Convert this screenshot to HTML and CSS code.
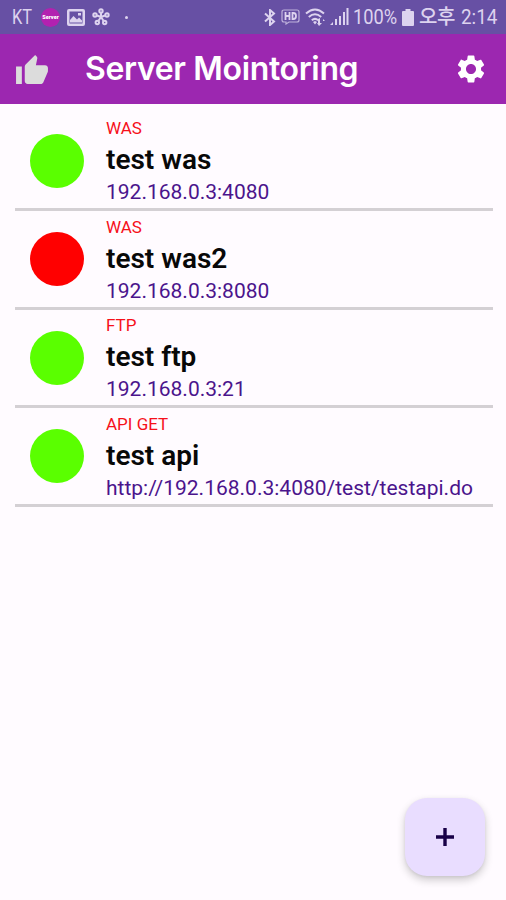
FILE: index.html
```html
<!DOCTYPE html>
<html lang="ko">
<head>
<meta charset="utf-8">
<title>Server Mointoring</title>
<link rel="stylesheet" href="styles.css">
</head>
<body>
<div class="statusbar">
  <div class="notices">
    <span class="carrier">KT</span>
    <span class="app-badge">Server</span>
    <svg class="picture" viewBox="0 0 18 17"><path fill-rule="evenodd" d="M2 0h14q2 0 2 2v13q0 2-2 2H2q-2 0-2-2V2q0-2 2-2zM2.500 2.500v12h13v-12zM3 13.500V11l3.500-4 3.500 3.500 2-2 3 3v2zM11 4h3v2.500h-3z"/></svg>
    <svg class="flower" viewBox="0 0 18 18"><g fill="none" stroke="currentColor" stroke-width="2"><path d="M9 9V5M9 9l4-1.500M9 9l2.500 3.700M9 9l-2.500 3.700M9 9L5 7.500"/><circle cx="9" cy="3" r="1.700"/><circle cx="15" cy="7" r="1.700"/><circle cx="12.700" cy="14.500" r="1.700"/><circle cx="5.300" cy="14.500" r="1.700"/><circle cx="3" cy="7" r="1.700"/></g></svg>
    <span class="dot"></span>
  </div>
  <div class="system">
    <svg class="bluetooth" viewBox="0 0 12 17"><path d="M1 4.500l9 8L6 16V1l4 3.500-9 8" fill="none" stroke="currentColor" stroke-width="2"/></svg>
    <svg class="hd" viewBox="0 0 19 16"><path d="M3 1h13q2 0 2 2v8q0 2-2 2H8l-3 2v-2H3q-2 0-2-2V3q0-2 2-2z" fill="none" stroke="currentColor" stroke-width="1.200" opacity=".75"/><path d="M4.500 3v8M8.500 3v8M4.500 7h4M11.500 4v6h1q2.500 0 2.500-3t-2.500-3z" fill="none" stroke="currentColor" stroke-width="1.800"/></svg>
    <svg class="wifi" viewBox="0 0 21 19"><path d="M1 5.500q9-8 18 0M3.800 9q6.200-5.400 12.400 0M6.800 12.200q3.200-2.600 6.400 0" fill="none" stroke="currentColor" stroke-width="2"/><path d="M8 14l2-1 2 1-2 2.500zM15 10v5h2l-3 3-2-3h1v-4zM18 11l2 2h-2z"/></svg>
    <svg class="signal" viewBox="0 0 19 18"><path d="M0 17l3-3v3zM5 11h2v6H5zM9 8h2v9H9zM13 4h2v13h-2zM16.500 0h2v17h-2z"/></svg>
    <span class="percent">100%</span>
    <svg class="battery" viewBox="0 0 12 17"><path d="M3.500 0h5v2H11q1 0 1 1v13q0 1-1 1H1q-1 0-1-1V3q0-1 1-1h2.500z"/></svg>
    <span class="meridiem">오후</span>
    <span class="clock">2:14</span>
  </div>
</div>
<header class="appbar">
  <svg class="thumb" viewBox="1 1 22 20"><path d="M1 21h4V9H1v12zm22-11c0-1.100-.9-2-2-2h-6.310l.95-4.570.03-.32c0-.41-.17-.79-.44-1.060L14.170 1 7.590 7.590C7.220 7.950 7 8.450 7 9v10c0 1.100.9 2 2 2h9c.83 0 1.540-.5 1.840-1.220l3.020-7.050c.09-.23.14-.47.14-.73v-2z"/></svg>
  <h1>Server Mointoring</h1>
  <svg class="gear" viewBox="2 2 20 20"><path d="M19.140 12.940c.04-.3.060-.61.060-.94 0-.32-.02-.64-.07-.94l2.030-1.580c.18-.14.23-.41.12-.61l-1.920-3.320c-.12-.22-.37-.29-.59-.22l-2.390.96c-.5-.38-1.030-.7-1.620-.94l-.36-2.540c-.04-.24-.24-.41-.48-.41h-3.840c-.24 0-.43.17-.47.41l-.36 2.540c-.59.24-1.130.57-1.620.94l-2.390-.96c-.22-.08-.47 0-.59.22L2.740 8.870c-.12.21-.08.47.12.61l2.030 1.580c-.05.3-.09.63-.09.94s.02.64.07.94l-2.030 1.580c-.18.14-.23.41-.12.61l1.920 3.320c.12.22.37.29.59.22l2.390-.96c.5.38 1.030.7 1.620.94l.36 2.540c.05.24.24.41.48.41h3.840c.24 0 .44-.17.47-.41l.36-2.540c.59-.24 1.130-.56 1.620-.94l2.390.96c.22.08.47 0 .59-.22l1.920-3.320c.12-.22.07-.47-.12-.61l-2.010-1.580zM12 15.600c-1.980 0-3.600-1.620-3.600-3.600s1.620-3.600 3.600-3.600 3.600 1.620 3.600 3.600-1.620 3.600-3.600 3.600z"/></svg>
</header>
<main class="servers">
  <article class="server">
    <span class="state up"></span>
    <div class="info"><div class="kind">WAS</div><div class="name">test was</div><div class="address">192.168.0.3:4080</div></div>
  </article>
  <article class="server">
    <span class="state down"></span>
    <div class="info"><div class="kind">WAS</div><div class="name">test was2</div><div class="address">192.168.0.3:8080</div></div>
  </article>
  <article class="server">
    <span class="state up"></span>
    <div class="info"><div class="kind">FTP</div><div class="name">test ftp</div><div class="address">192.168.0.3:21</div></div>
  </article>
  <article class="server">
    <span class="state up"></span>
    <div class="info"><div class="kind">API GET</div><div class="name">test api</div><div class="address">http://192.168.0.3:4080/test/testapi.do</div></div>
  </article>
</main>
<button class="fab" aria-label="Add"><svg viewBox="0 0 18 18"><path d="M7.300 0h3.400v7.300H18v3.400h-7.300V18H7.300v-7.300H0V7.300h7.300z"/></svg></button>
</body>
</html>
```
FILE: styles.css
```css
* { box-sizing: border-box; }
body {
  margin: 0;
  height: 900px;
  overflow: hidden;
  background: #fffbff;
  font-family: Roboto, "Noto Sans CJK KR", sans-serif;
}
svg { display: block; flex: none; fill: currentColor; }
.statusbar {
  display: flex;
  justify-content: space-between;
  height: 34px;
  padding: 0 10px 0 12px;
  background: #6750a4;
  color: #ddd3ef;
  font-size: 20px;
  line-height: 34px;
  white-space: nowrap;
}
.notices, .system { display: flex; align-items: center; }
.carrier, .percent, .clock { transform-origin: left center; }
.carrier { width: 29px; font-size: 21px; transform: scaleX(.78); }
.app-badge {
  width: 19px;
  height: 19px;
  border-radius: 50%;
  background: #b321b0;
  color: #fff;
  font-size: 5.5px;
  font-weight: 900;
  line-height: 19px;
  text-align: center;
}
.picture { width: 18px; height: 17px; margin-left: 7px; }
.flower { width: 18px; height: 18px; margin-left: 7px; }
.dot { width: 3px; height: 3px; margin-left: 15px; border-radius: 50%; background: currentColor; }
.bluetooth { width: 12px; height: 17px; }
.hd { width: 19px; height: 16px; margin-left: 5px; }
.wifi { width: 21px; height: 19px; margin-left: 5px; }
.signal { width: 19px; height: 18px; margin-left: 4px; }
.percent { width: 46px; margin-left: 4px; font-size: 21px; transform: scaleX(.87); }
.battery { width: 12px; height: 17px; margin-left: 3px; }
.meridiem { width: 38px; margin-left: 5px; font-size: 20px; font-weight: 500; letter-spacing: -0.5px; }
.clock { width: 35px; margin-left: 4px; font-size: 21px; transform: scaleX(.9); }
.appbar {
  display: flex;
  align-items: center;
  height: 70px;
  padding: 0 21px 0 16px;
  background: #9c27b0;
  color: #fff;
}
.thumb { width: 32px; height: 29px; color: #dcdcdc; }
.appbar h1 {
  margin: 0 auto 0 37px;
  font: 600 32px/40px Inter, sans-serif;
  letter-spacing: -0.35px;
  white-space: nowrap;
}
.gear { width: 28px; height: 28px; }
.servers { padding: 8.5px 13px 0 15px; }
.server {
  display: flex;
  align-items: center;
  height: 98.5px;
  padding-left: 15px;
  border-bottom: 3px solid #d4d0d4;
}
.state { flex: none; width: 54px; height: 54px; margin-top: 1px; border-radius: 50%; }
.up { background: #5aff00; }
.down { background: #f00; }
.info { margin-left: 22px; padding-top: 2px; white-space: nowrap; }
.kind { color: #f6101a; font-size: 17px; line-height: 26px; }
.name { color: #080808; font-size: 28px; font-weight: 600; line-height: 37px; }
.address { color: #4b148c; font-size: 21px; line-height: 29px; }
.fab {
  position: absolute;
  right: 21px;
  bottom: 24px;
  display: flex;
  align-items: center;
  justify-content: center;
  width: 80px;
  height: 78px;
  padding: 0;
  border: 0;
  border-radius: 22px;
  background: #e9ddff;
  color: #180048;
  box-shadow: 0 4px 8px rgba(0, 0, 0, .2), 0 1px 3px rgba(0, 0, 0, .06);
}
.fab svg { width: 18px; height: 18px; }
```
